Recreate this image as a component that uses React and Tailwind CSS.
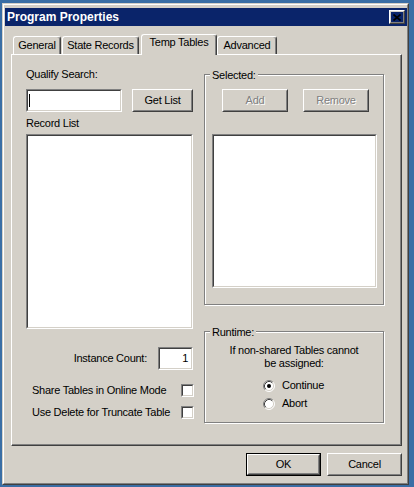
import React from 'react';

const font = { fontFamily: '"Liberation Sans", Arial, sans-serif' };

// Win2000 3D edges
const Raised = ({ className = '', children }) => (
  <div className={`border border-t-white border-l-white border-b-[#404040] border-r-[#404040] ${className}`}>
    <div className="w-full h-full border border-t-[#D4D0C8] border-l-[#D4D0C8] border-b-[#808080] border-r-[#808080] flex items-center justify-center">
      {children}
    </div>
  </div>
);

const Sunken = ({ className = '', inner = '', children }) => (
  <div className={`border border-t-[#808080] border-l-[#808080] border-b-white border-r-white ${className}`}>
    <div className={`w-full h-full bg-white border border-t-[#404040] border-l-[#404040] border-b-[#D4D0C8] border-r-[#D4D0C8] ${inner}`}>
      {children}
    </div>
  </div>
);

const Button = ({ label, disabled, isDefault, className = '' }) => {
  const text = disabled ? (
    <span className="text-[#808080] [text-shadow:1px_1px_0_#ffffff]">{label}</span>
  ) : (
    <span>{label}</span>
  );
  if (isDefault) {
    return (
      <div className={`border border-black ${className}`}>
        <Raised className="w-full h-full">{text}</Raised>
      </div>
    );
  }
  return <Raised className={className}>{text}</Raised>;
};

const Checkbox = () => <Sunken className="w-[13px] h-[13px] shrink-0" />;

const Radio = ({ checked }) => (
  <svg width="12" height="12" viewBox="0 0 12 12" className="shrink-0">
    <circle cx="6" cy="6" r="5" fill="#ffffff" />
    <path d="M2.11 9.89 A5.5 5.5 0 0 1 9.89 2.11" fill="none" stroke="#808080" strokeWidth="1" />
    <path d="M9.89 2.11 A5.5 5.5 0 0 1 2.11 9.89" fill="none" stroke="#ffffff" strokeWidth="1" />
    <path d="M2.82 9.18 A4.5 4.5 0 0 1 9.18 2.82" fill="none" stroke="#404040" strokeWidth="1" />
    <path d="M9.18 2.82 A4.5 4.5 0 0 1 2.82 9.18" fill="none" stroke="#D4D0C8" strokeWidth="1" />
    {checked && <circle cx="6" cy="6" r="2" fill="#000000" />}
  </svg>
);

const GroupBox = ({ title, className = '', children }) => (
  <div className={`relative border border-[#808080] shadow-[inset_1px_1px_0_#ffffff,1px_1px_0_#ffffff] ${className}`}>
    <span className="absolute left-[5px] -top-[6px] px-[2px] bg-[#D4D0C8] leading-[13px]">{title}</span>
    {children}
  </div>
);

const Tab = ({ label, width, selected, className = '' }) => (
  <div
    className={`${width} ${className} border-l border-t border-white border-r border-r-[#404040] shadow-[inset_-1px_0_0_#808080] rounded-t-[3px] bg-[#D4D0C8] text-center ${
      selected ? 'relative z-10 h-[21px] pt-[1px]' : 'h-[18px] mb-[1px] pt-[2px]'
    }`}
  >
    {label}
  </div>
);

export default function App() {
  return (
    <div className="w-[414px] h-[487px] bg-[#3A6EA5] pt-[3px] pl-[2px] text-[11px] leading-[13px] tracking-[-0.25px] text-black" style={font}>
      {/* window frame */}
      <div className="w-[407px] h-[482px] border border-t-[#D4D0C8] border-l-[#D4D0C8] border-b-[#404040] border-r-[#404040]">
        <div className="w-full h-full bg-[#D4D0C8] border border-t-white border-l-white border-b-[#808080] border-r-[#808080] pt-[3px] flex flex-col">
          {/* caption */}
          <div className="ml-[1px] w-[402px] h-[18px] bg-[#0A246A] flex items-center justify-between pl-[2px] pr-[2px]">
            <span className="text-white font-bold text-[12px] leading-[14px] tracking-normal">Program Properties</span>
            <Raised className="w-[16px] h-[14px]">
              <svg width="8" height="7" viewBox="0 0 8 7">
                <path d="M0.5 0.5 L7.5 6.5 M7.5 0.5 L0.5 6.5" stroke="#000" strokeWidth="1.7" />
              </svg>
            </Raised>
          </div>

          {/* tabs */}
          <div className="mt-[8px] ml-[9px] h-[21px] flex items-end">
            <Tab label="General" width="w-[48px]" />
            <Tab label="State Records" width="w-[77px]" className="ml-[1px]" />
            <Tab label="Temp Tables" width="w-[76px]" className="ml-[2px]" selected />
            <Tab label="Advanced" width="w-[60px]" />
          </div>

          {/* tab page */}
          <div className="-mt-[1px] ml-[7px] w-[391px] h-[392px] border-l border-t border-white border-r border-b border-r-[#404040] border-b-[#404040] shadow-[inset_-1px_-1px_0_#808080] flex pl-[14px]">
            {/* left column */}
            <div className="w-[167px] flex flex-col">
              <div className="mt-[13px]">Qualify Search:</div>
              <div className="mt-[8px] flex">
                <Sunken className="w-[96px] h-[23px]" inner="flex items-center pl-[1px]">
                  <span className="w-px h-[13px] bg-black" />
                </Sunken>
                <Button label="Get List" className="ml-[10px] w-[61px] h-[23px]" />
              </div>
              <div className="mt-[5px]">Record List</div>
              <Sunken className="mt-[4px] w-[167px] h-[195px]" />
              <div className="mt-[18px] flex items-center justify-end">
                <span>Instance Count:</span>
                <Sunken className="ml-[11px] w-[35px] h-[23px]" inner="flex items-center justify-end pr-[3px]">
                  1
                </Sunken>
              </div>
              <div className="mt-[14px] flex items-center pl-[6px] -mr-[1px]">
                <span>Share Tables in Online Mode</span>
                <div className="ml-auto"><Checkbox /></div>
              </div>
              <div className="mt-[9px] flex items-center pl-[6px] -mr-[1px]">
                <span>Use Delete for Truncate Table</span>
                <div className="ml-auto"><Checkbox /></div>
              </div>
            </div>

            {/* right column */}
            <div className="ml-[11px] w-[181px] flex flex-col">
              <GroupBox title="Selected:" className="mt-[19px] w-[180px] h-[231px] pt-[14px]">
                <div className="flex pl-[17px]">
                  <Button label="Add" disabled className="w-[66px] h-[23px]" />
                  <Button label="Remove" disabled className="ml-[15px] w-[66px] h-[23px]" />
                </div>
                <Sunken className="mt-[22px] ml-[7px] w-[165px] h-[154px]" />
              </GroupBox>

              <GroupBox title="Runtime:" className="mt-[26px] w-[180px] h-[92px] pt-[12px]">
                <div className="text-center">
                  If non-shared Tables cannot
                  <br />
                  be assigned:
                </div>
                <div className="mt-[9px] pl-[58px] h-[13px] flex items-center">
                  <Radio checked />
                  <span className="ml-[7px]">Continue</span>
                </div>
                <div className="mt-[5px] pl-[58px] h-[13px] flex items-center">
                  <Radio />
                  <span className="ml-[7px]">Abort</span>
                </div>
              </GroupBox>
            </div>
          </div>

          {/* dialog buttons */}
          <div className="mt-[7px] flex justify-end pr-[5px]">
            <Button label="OK" isDefault className="w-[75px] h-[23px]" />
            <Button label="Cancel" className="ml-[6px] w-[75px] h-[23px]" />
          </div>
        </div>
      </div>
    </div>
  );
}
